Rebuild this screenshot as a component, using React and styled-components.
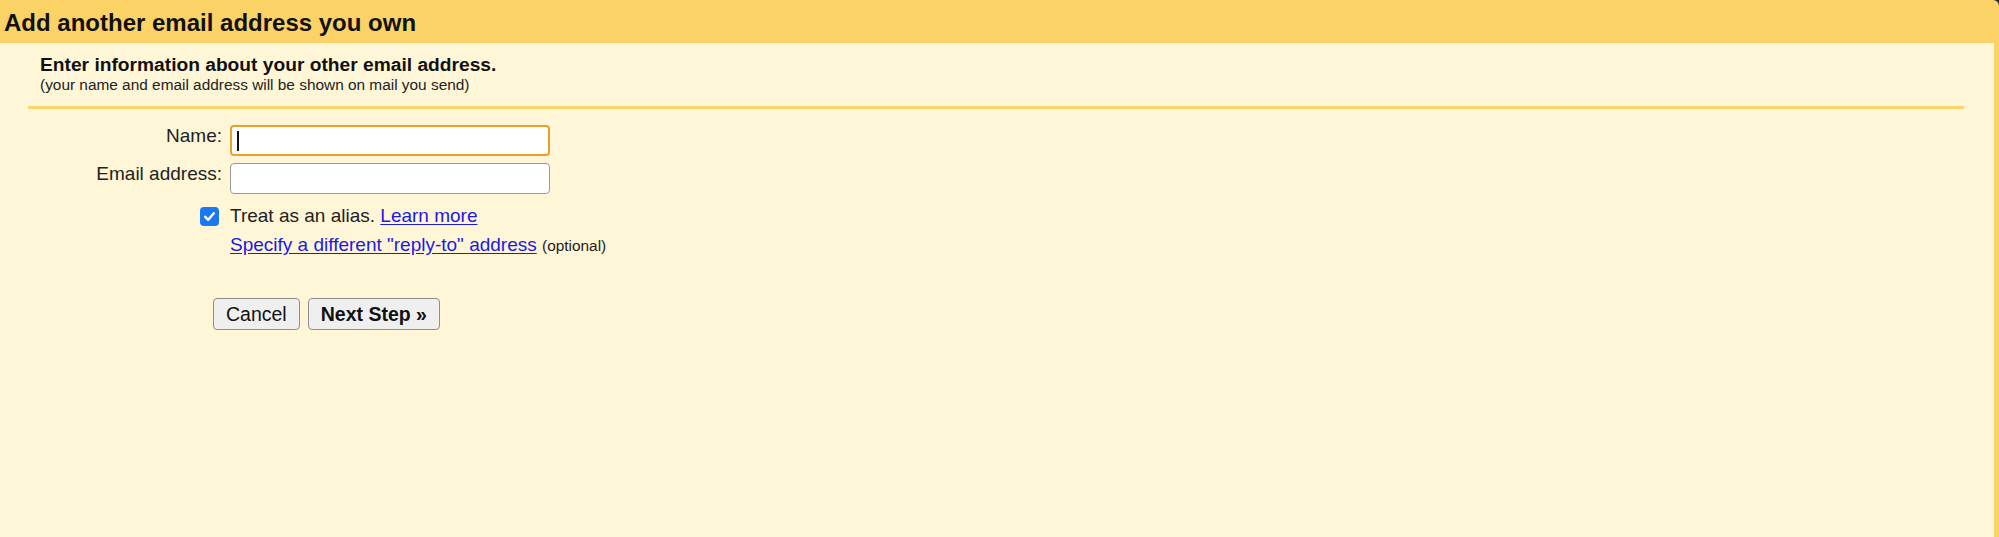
import styled, { createGlobalStyle } from "styled-components";

const GlobalStyle = createGlobalStyle`
    html, body {
        margin: 0;
        padding: 0;
        background: #2e2b27;
    }
    body {
        font-family: "Liberation Sans", Arial, Helvetica, sans-serif;
        color: #222;
    }
`;

const Caret = () => <CaretBar />;

const CheckMark = () => (
    <svg width="13" height="13" viewBox="0 0 13 13" aria-hidden="true">
        <path d="M2.2 6.8 L5.2 9.8 L10.8 3.2" fill="none" stroke="#fff" strokeWidth="2.4" strokeLinecap="round" strokeLinejoin="round" />
    </svg>
);

const App = () => {
    return (
        <>
            <GlobalStyle />
            <Panel>
                <Header>Add another email address you own</Header>
                <Body>
                    <Intro>
                        <h2>Enter information about your other email address.</h2>
                        <p>(your name and email address will be shown on mail you send)</p>
                    </Intro>
                    <Divider />

                    <Form>
                        <Label htmlFor="name">Name:</Label>
                        <FieldWrap>
                            <Input id="name" type="text" $focused />
                            <Caret />
                        </FieldWrap>

                        <Label htmlFor="email">Email address:</Label>
                        <FieldWrap>
                            <Input id="email" type="text" />
                        </FieldWrap>

                        <Checkbox role="checkbox" aria-checked="true">
                            <CheckMark />
                        </Checkbox>
                        <AliasBlock>
                            <div>
                                Treat as an alias. <Link href="#">Learn more</Link>
                            </div>
                            <div>
                                <Link href="#">Specify a different "reply-to" address</Link>{" "}
                                <Small>(optional)</Small>
                            </div>
                        </AliasBlock>
                    </Form>

                    <ButtonRow>
                        <Button>Cancel</Button>
                        <Button $primary>Next Step »</Button>
                    </ButtonRow>
                </Body>
            </Panel>
        </>
    );
};

const Panel = styled.div`
    min-height: 100vh;
    display: flex;
    flex-direction: column;
    background: #fbd266;
    border-top-right-radius: 6px;
`;

const Header = styled.h1`
    margin: 0;
    height: 43px;
    box-sizing: border-box;
    padding: 2px 0 0 4px;
    display: flex;
    align-items: center;
    font-size: 24px;
    font-weight: 700;
    color: #111;
`;

const Body = styled.div`
    flex: 1;
    margin-right: 5px;
    background: #fff6d8;
    padding: 11px 30px 0 28px;
`;

const Intro = styled.div`
    padding-left: 12px;
    h2 {
        margin: 0;
        font-size: 19.2px;
        line-height: 22px;
        font-weight: 700;
        color: #111;
    }
    p {
        margin: 0;
        font-size: 15.4px;
        line-height: 18px;
        color: #222;
    }
`;

const Divider = styled.div`
    height: 3px;
    margin-top: 12px;
    background: #fcd46c;
`;

const Form = styled.div`
    display: grid;
    grid-template-columns: 194px 320px;
    column-gap: 8px;
    row-gap: 7px;
    margin-top: 16px;
    font-size: 19px;
`;

const Label = styled.label`
    justify-self: end;
    align-self: start;
    line-height: 22px;
    color: #222;
`;

const FieldWrap = styled.div`
    position: relative;
    height: 31px;
`;

const Input = styled.input`
    display: block;
    width: 100%;
    height: 31px;
    box-sizing: border-box;
    margin: 0;
    padding: 0 6px;
    background: #fff;
    border: ${(p) => (p.$focused ? "2.5px solid #e9a12a" : "1.5px solid #9a9a9a")};
    border-radius: 4px;
    font: inherit;
    outline: none;
`;

const CaretBar = styled.span`
    position: absolute;
    left: 7px;
    top: 6px;
    width: 1.5px;
    height: 20px;
    background: #111;
`;

const Checkbox = styled.span`
    justify-self: end;
    align-self: start;
    margin-top: 6px;
    margin-right: 3px;
    width: 19px;
    height: 19px;
    border-radius: 4px;
    background: #1a78f2;
    display: flex;
    align-items: center;
    justify-content: center;
`;

const AliasBlock = styled.div`
    grid-column: 2 / span 1;
    white-space: nowrap;
    line-height: 29px;
    color: #222;
`;

const Link = styled.a`
    color: #1a1ae6;
    text-decoration: underline;
    text-underline-offset: 2px;
`;

const Small = styled.span`
    font-size: 15.4px;
    color: #222;
`;

const ButtonRow = styled.div`
    display: flex;
    gap: 8px;
    margin-top: 38px;
    padding-left: 185px;
`;

const Button = styled.button`
    height: 32px;
    box-sizing: border-box;
    padding: 0 12px;
    background: #efefef;
    border: 1px solid #8d8d8d;
    border-radius: 4px;
    font-family: "Liberation Sans", Arial, Helvetica, sans-serif;
    font-size: 19.5px;
    font-weight: ${(p) => (p.$primary ? 700 : 400)};
    color: #111;
    cursor: pointer;
`;

export default App;
